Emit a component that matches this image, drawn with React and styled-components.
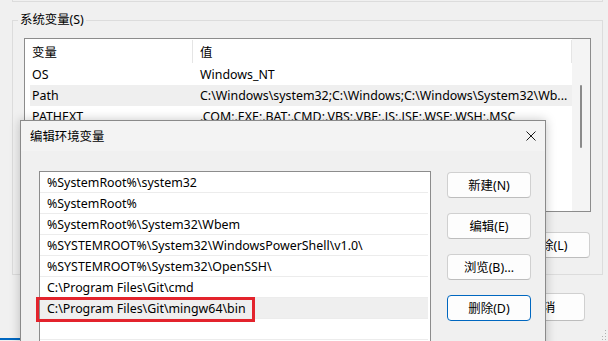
import React from 'react';
import styled, { createGlobalStyle } from 'styled-components';

const Global = createGlobalStyle`
  html, body { margin: 0; padding: 0; }
  body {
    width: 608px; height: 341px; overflow: hidden;
    background: #f0f0f0;
    font-family: "Noto Sans", "Noto Sans CJK SC", sans-serif;
    font-size: 12.4px; color: #000;
  }
  #root { width: 608px; height: 341px; }
`;

const Window = styled.div`
  position: relative;
  width: 608px; height: 341px; overflow: hidden;
  background: #f0f0f0;
  display: flex; flex-direction: column;
  box-sizing: border-box;
`;

const PrevGroup = styled.div`
  box-sizing: border-box;
  height: 2px;
  margin: 0 5px 0 12px;
  border: 1px solid #dcdcdc;
  border-top: none;
`;

const Group = styled.fieldset`
  margin: 11px 5px 0 12px;
  padding: 0 11px 16px 11px;
  border: 1px solid #dcdcdc;
  min-width: 0;
  display: flex; flex-direction: column;
`;

const Legend = styled.legend`
  margin-left: -6px;
  padding: 0 2px;
  line-height: 14px;
  height: 14px;
`;

const ListView = styled.div`
  box-sizing: border-box;
  margin-top: 11px;
  height: 174px;
  border: 1px solid #8c8c8c;
  background: #fff;
  display: flex;
  overflow: hidden;
`;

const ListBody = styled.div`
  flex: 1;
  padding-left: 5px;
  display: flex; flex-direction: column;
`;

const HeaderRow = styled.div`
  height: 25px;
  display: flex;
  align-items: stretch;
`;

const HeaderCell = styled.div`
  box-sizing: border-box;
  width: ${p => p.$w ? p.$w + 'px' : 'auto'};
  flex: ${p => p.$w ? 'none' : '1'};
  padding-left: ${p => p.$pl}px;
  display: flex; align-items: center;
  border-right: 1px solid #e5e5e5;
  margin: 1px 0 1px 0;
`;

const Row = styled.div`
  height: 21px;
  display: flex; align-items: center;
  background: ${p => p.$hl ? '#efefef' : 'transparent'};
  white-space: nowrap;
`;

const Cell = styled.div`
  box-sizing: border-box;
  width: ${p => p.$w ? p.$w + 'px' : 'auto'};
  flex: ${p => p.$w ? 'none' : '1'};
  padding-left: ${p => p.$pl}px;
  overflow: hidden;
`;

const ScrollTrack = styled.div`
  width: 18px;
  background: #f4f4f4;
  position: relative;
`;

const ScrollThumb = styled.div`
  position: absolute;
  left: 8px; top: 46px;
  width: 2px; height: 63px;
  border-radius: 1px;
  background: #8b8b8b;
`;

const ButtonRow = styled.div`
  display: flex;
  justify-content: flex-end;
  gap: ${p => p.$gap || 8}px;
  margin-top: ${p => p.$mt || 0}px;
  margin-right: ${p => p.$mr || 0}px;
`;

const Button = styled.button`
  box-sizing: border-box;
  width: 84px;
  height: ${p => p.$h || 26}px;
  padding: 0;
  font: inherit;
  color: #000;
  background: #fdfdfd;
  border: 1px solid ${p => p.$default ? '#0067c0' : '#d0d0d0'};
  border-bottom-color: ${p => p.$default ? '#0067c0' : '#bdbdbd'};
  border-radius: 4px;
  display: flex; align-items: center; justify-content: center;
`;

const BlueStrip = styled.div`
  margin-top: 17px;
  width: 20px; height: 2px;
  background: #0067c0;
`;

const Grip = styled.svg`
  position: absolute;
  right: 1px; bottom: 1px;
`;

/* ---------- dialog ---------- */

const Dialog = styled.div`
  position: absolute;
  left: 20px; top: 120px;
  width: 526px; height: 250px;
  box-sizing: border-box;
  border: 1px solid #8a8a8a;
  background: #f0f0f0;
  box-shadow: 0 0 10px rgba(0,0,0,0.22);
  display: flex; flex-direction: column;
`;

const TitleBar = styled.div`
  height: 30px;
  display: flex; align-items: center; justify-content: space-between;
  padding-left: 9px;
  background: #f3f3f3;
`;

const CloseBox = styled.div`
  width: 28px; height: 30px;
  display: flex; align-items: center; justify-content: center;
`;

const DialogBody = styled.div`
  flex: 1;
  display: flex;
  padding: 20px 14px 0 18px;
  gap: 16px;
`;

const PathList = styled.div`
  box-sizing: border-box;
  width: 392px;
  border: 1px solid #8c8c8c;
  border-bottom: none;
  background: #fff;
  padding-right: 2px;
`;

const PathRow = styled.div`
  box-sizing: border-box;
  position: relative;
  height: 21px;
  padding-left: 7px;
  display: flex; align-items: center;
  border-bottom: 1px solid #ececec;
  background: ${p => p.$sel ? '#efefef' : 'transparent'};
  white-space: nowrap;
`;

const RedMark = styled.div`
  position: absolute;
  left: -4px; top: -1px;
  width: 219px; height: 25px;
  box-sizing: border-box;
  border: 3px solid #e3232c;
  pointer-events: none;
`;

const ButtonColumn = styled.div`
  display: flex; flex-direction: column;
  gap: 15px;
  padding-top: 1px;
`;

const sysVars = [
  { name: 'OS', value: 'Windows_NT' },
  { name: 'Path', value: 'C:\\Windows\\system32;C:\\Windows;C:\\Windows\\System32\\Wb...', hl: true },
  { name: 'PATHEXT', value: '.COM;.EXE;.BAT;.CMD;.VBS;.VBE;.JS;.JSE;.WSF;.WSH;.MSC' },
];

const paths = [
  '%SystemRoot%\\system32',
  '%SystemRoot%',
  '%SystemRoot%\\System32\\Wbem',
  '%SYSTEMROOT%\\System32\\WindowsPowerShell\\v1.0\\',
  '%SYSTEMROOT%\\System32\\OpenSSH\\',
  'C:\\Program Files\\Git\\cmd',
  'C:\\Program Files\\Git\\mingw64\\bin',
  '',
];

export default function App() {
  return (
    <>
      <Global />
      <Window>
        <PrevGroup />
        <Group>
          <Legend>系统变量(S)</Legend>
          <ListView>
            <ListBody>
              <HeaderRow>
                <HeaderCell $w={163} $pl={2}>变量</HeaderCell>
                <HeaderCell $pl={7}>值</HeaderCell>
              </HeaderRow>
              {sysVars.map(v => (
                <Row key={v.name} $hl={v.hl}>
                  <Cell $w={163} $pl={2}>{v.name}</Cell>
                  <Cell $pl={7}>{v.value}</Cell>
                </Row>
              ))}
            </ListBody>
            <ScrollTrack><ScrollThumb /></ScrollTrack>
          </ListView>
          <ButtonRow $gap={8} $mt={20} $mr={1}>
            <Button>删除(L)</Button>
          </ButtonRow>
        </Group>
        <ButtonRow $gap={8} $mt={18} $mr={23}>
          <Button $h={28}>取消</Button>
        </ButtonRow>
        <BlueStrip />
        <Grip width="6" height="10" viewBox="0 0 6 10">
          <rect x="4" y="0" width="1" height="1" fill="#b0b0b0" />
          <rect x="4" y="3" width="1" height="1" fill="#b0b0b0" />
          <rect x="1" y="6" width="1" height="1" fill="#b0b0b0" />
          <rect x="4" y="6" width="1" height="1" fill="#b0b0b0" />
          <rect x="1" y="9" width="1" height="1" fill="#b0b0b0" />
          <rect x="4" y="9" width="1" height="1" fill="#b0b0b0" />
        </Grip>

        <Dialog>
          <TitleBar>
            <span>编辑环境变量</span>
            <CloseBox>
              <svg width="10" height="10" viewBox="0 0 10 10">
                <path d="M0.5 0.5 L9.5 9.5 M9.5 0.5 L0.5 9.5" stroke="#1a1a1a" strokeWidth="1" />
              </svg>
            </CloseBox>
          </TitleBar>
          <DialogBody>
            <PathList>
              {paths.map((p, i) => (
                <PathRow key={i} $sel={i === 6}>
                  {p}
                  {i === 6 && <RedMark />}
                </PathRow>
              ))}
            </PathList>
            <ButtonColumn>
              <Button>新建(N)</Button>
              <Button>编辑(E)</Button>
              <Button>浏览(B)...</Button>
              <Button $default>删除(D)</Button>
            </ButtonColumn>
          </DialogBody>
        </Dialog>
      </Window>
    </>
  );
}
